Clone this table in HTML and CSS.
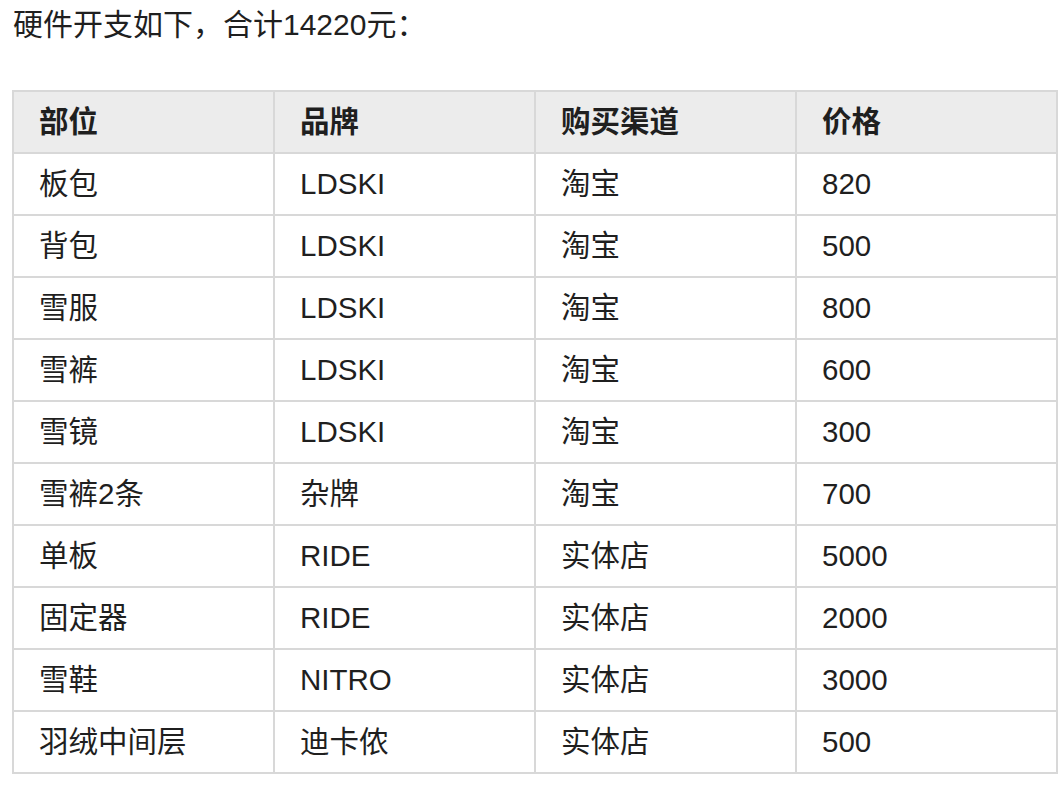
FILE: index.html
```html
<!DOCTYPE html>
<html lang="zh">
<head>
<meta charset="utf-8">
<link rel="stylesheet" href="styles.css">
</head>
<body>
<div class="page">
  <p class="intro">硬件开支如下，合计14220元：</p>
  <table class="costs">
    <thead>
      <tr><th>部位</th><th>品牌</th><th>购买渠道</th><th>价格</th></tr>
    </thead>
    <tbody>
      <tr><td>板包</td><td>LDSKI</td><td>淘宝</td><td>820</td></tr>
      <tr><td>背包</td><td>LDSKI</td><td>淘宝</td><td>500</td></tr>
      <tr><td>雪服</td><td>LDSKI</td><td>淘宝</td><td>800</td></tr>
      <tr><td>雪裤</td><td>LDSKI</td><td>淘宝</td><td>600</td></tr>
      <tr><td>雪镜</td><td>LDSKI</td><td>淘宝</td><td>300</td></tr>
      <tr><td>雪裤2条</td><td>杂牌</td><td>淘宝</td><td>700</td></tr>
      <tr><td>单板</td><td>RIDE</td><td>实体店</td><td>5000</td></tr>
      <tr><td>固定器</td><td>RIDE</td><td>实体店</td><td>2000</td></tr>
      <tr><td>雪鞋</td><td>NITRO</td><td>实体店</td><td>3000</td></tr>
      <tr><td>羽绒中间层</td><td>迪卡侬</td><td>实体店</td><td>500</td></tr>
    </tbody>
  </table>
</div>
</body>
</html>
```

FILE: styles.css
```css
html, body {
  margin: 0;
  padding: 0;
  background: #ffffff;
}
body {
  font-family: "Liberation Sans", "Noto Sans CJK SC", sans-serif;
  color: #1f1f1f;
  font-size: 29.5px;
}
.page {
  padding: 0 0 0 12px;
}
.intro {
  margin: 0;
  padding-left: 1px;
  line-height: 50px;
  font-size: 30px;
}
.costs {
  margin-top: 40px;
  width: 1046px;
  border-collapse: collapse;
  table-layout: fixed;
}
.costs th,
.costs td {
  border: 2px solid #d8d8d8;
  height: 60px;
  padding: 0 0 0 25px;
  text-align: left;
  vertical-align: middle;
  line-height: 30px;
}
.costs th {
  background: #ececec;
  font-weight: bold;
}
```
